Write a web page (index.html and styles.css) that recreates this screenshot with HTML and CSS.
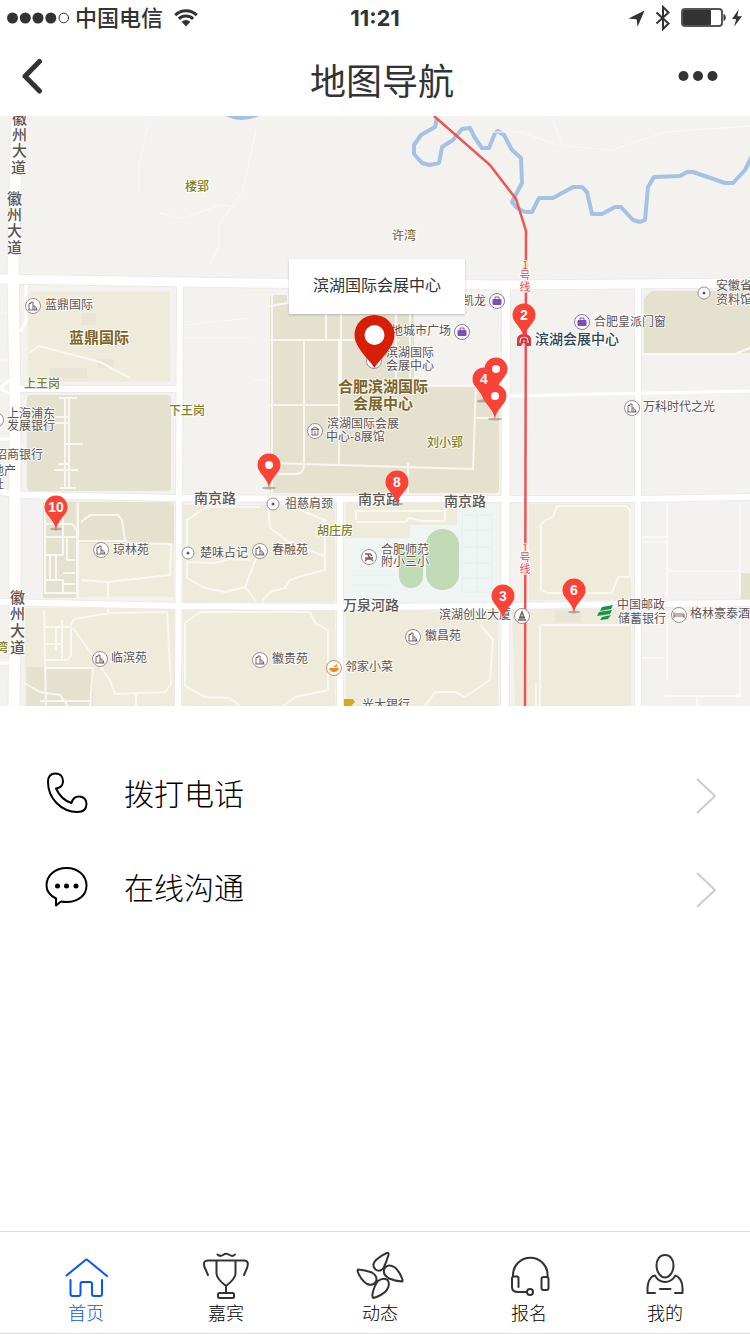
FILE: index.html
```html
<!DOCTYPE html>
<html lang="zh-CN">
<head>
    <meta charset="UTF-8">
    <meta name="viewport" content="width=device-width, initial-scale=1.0">
    <title>地图导航</title>
    <link rel="stylesheet" href="styles.css">
</head>
<body>
    <div class="page">
        <div class="status-bar">
            <div class="status-left">
                <svg class="signal" width="63" height="12" viewBox="0 0 63 12">
                    <circle cx="5.5" cy="6" r="5.5"/>
                    <circle cx="18.3" cy="6" r="5.5"/>
                    <circle cx="31" cy="6" r="5.5"/>
                    <circle cx="43.8" cy="6" r="5.5"/>
                    <circle class="empty" cx="56.8" cy="6" r="4.8"/>
                </svg>
                <span class="carrier">中国电信</span>
                <svg class="wifi" width="24" height="18" viewBox="0 0 24 18">
                    <path class="arc" d="M1.2 6.2a15.5 15.5 0 0 1 21.6 0M4.9 9.9a10.2 10.2 0 0 1 14.2 0"/>
                    <path d="M7.6 12.8a6.2 6.2 0 0 1 8.8 0L12 17.4z"/>
                </svg>
            </div>
            <div class="time">11:21</div>
            <div class="status-right">
                <svg width="17" height="17" viewBox="0 0 17 17"><path d="M.5 8.6 16.5.5 9.6 16.7 8.6 9.2z"/></svg>
                <svg class="bluetooth" width="16" height="26" viewBox="0 0 16 26"><path d="M1.5 7.5 13.5 18.5 8 24V2l5.5 5.5-12 11"/></svg>
                <svg class="battery" width="46" height="20" viewBox="0 0 46 20">
                    <rect class="case" x="1" y="1" width="40" height="17" rx="3"/>
                    <rect x="2" y="2" width="28" height="15" rx="1"/>
                    <path d="M42.5 6c3 .5 3 6.5 0 7z"/>
                </svg>
                <svg width="12" height="18" viewBox="0 0 12 18"><path d="M7.6.5 1 10h4.2L3.2 17.5 11 7.2H6.4z"/></svg>
            </div>
        </div>

        <header class="nav-bar">
            <button class="back" type="button" aria-label="返回">
                <svg width="24" height="36" viewBox="0 0 24 36"><path d="M19.5 3.5 5 18.3 19.5 33"/></svg>
            </button>
            <h1>地图导航</h1>
            <button class="more" type="button" aria-label="更多">
                <svg width="40" height="12" viewBox="0 0 40 12"><circle cx="5.5" cy="6" r="5"/><circle cx="20" cy="6" r="5"/><circle cx="34.5" cy="6" r="5"/></svg>
            </button>
        </header>

        <main>
            <svg class="map" viewBox="0 116 750 590">
                <defs>
                    <path id="pin" d="M0 23C-1 17-3.5 14-8.5 7.8A11.5 11.5 0 1 1 8.5 7.8C3.5 14 1 17 0 23z"/>
                    <g id="building">
                        <circle class="poi" r="7.5"/>
                        <path class="glyph" d="M-4 4V-2.5H-2V-4H0V4M0 0H2V4M3.5 4V1.5M-4.5 4H4.5"/>
                    </g>
                    <g id="bag">
                        <circle class="poi shop" r="7.5"/>
                        <rect class="shop-fill" x="-4.5" y="-2" width="9" height="6" rx="1"/>
                        <path class="shop-line" d="M-2-2V-4H2V-2"/>
                    </g>
                    <g id="spot">
                        <circle class="poi" r="6"/>
                        <circle class="dot" r="1.5"/>
                    </g>
                </defs>

                <rect class="land" x="0" y="116" width="750" height="590"/>

                <!-- blocks -->
                <g class="block">
                    <path d="M31 291H170V382H28V296z"/>
                    <path d="M44 502H174V597H44zM25 608H175V706H25z"/>
                    <path d="M183 505H335V602H183zM183 610H335V706H183z"/>
                    <path d="M346 610H498V706H346zM529 504H631V600H529zM512 608H631V706H515z"/>
                </g>
                <g class="block-dark">
                    <rect x="27" y="395" width="144" height="96" rx="4"/>
                    <path d="M270 295H414V386H499V490Q499 493 495 493H270z"/>
                    <path d="M78 502H170L174 506V543H78zM43 502H76V598H43zM27 667H93V706H27z"/>
                    <path d="M652 291H750V353H644V298zM741 573H750V600H741z"/>
                </g>
                <rect class="school" x="346" y="505" width="151" height="97"/>
                <path class="block" d="M346 503H457V525H410V538H346z"/>
                <path class="court" d="M462 515H492V592H462zM462 530H492M462 547H492M462 563H492M462 578H492M477 515V592M352 575H395M352 585H390"/>
                <rect class="field" x="426" y="529" width="33" height="61" rx="16"/>
                <rect class="field" x="399" y="543" width="24" height="45" rx="12"/>
                <g class="shade">
                    <rect x="82" y="313" width="14" height="12"/>
                    <rect x="50" y="368" width="37" height="10"/>
                    <rect x="97" y="359" width="17" height="9"/>
                    <rect x="555" y="611" width="26" height="11"/>
                </g>

                <!-- water -->
                <path class="water-fill" d="M226 116Q241 124 259 116z"/>
                <path class="water" d="M437 118 435 127 421 135 414 145V154L422 163 430 165 439 163 442 147 453 140 462 129 470 128 475 138 482 148H489L495 133 498 131 504 135 512 150 521 158 522 183 512 202 517 208 525 212H532L539 198H553L573 187H582L587 192 592 214H602L615 207H621L633 220 640 222 645 220 648 187 654 177 680 176 687 172H693L725 183H733L745 170 752 156"/>

                <!-- footpaths -->
                <path class="trail" d="M149 120 139 165V192M160 213 181 219 220 205 235 207M256 130 243 190 219 225V245L210 265M184 325 250 318M551 116 563 146 612 150 665 132 750 126M490 132 520 132 560 146M0 313H10M0 360H9M250 380H268M185 338H250"/>
                <path class="lane" d="M29 353 39 346 100 362 130 378M59 398H77M65 398V488M69 398V488M55 417H70M55 423H70M66 444H83M54 470H78M58 464H70M60 488H76"/>
                <path class="lane" d="M270 306 288 303V295M326 295V340M341 295V385M270 340H400M304 340V465Q304 474 295 474H270M339 340V464M270 405H338M270 463 473 469 476 385M408 463V493M396 295V386M410 295V386H498M476 418H498M272 295V493"/>
                <path class="lane" d="M44 524H72L77 530V595M44 537H76M44 555H63V500M50 555V580M56 555V580M44 580H63V594M63 573H75M63 584H75M67 537V560H75M44 593H76M45 500V593M78 503V597M81 522 90 515H118L122 520 125 540 129 543 171 544 170 575 108 582 81 580M78 541H125M108 582V612M44 610 46 706M44 627H71V655Q69 660 64 660H45M44 644H62M56 627V650M62 620V660M71 625 74 619 110 613 167 612 171 684 165 692 115 694 110 680 73 628M45 668H93L90 706M24 683 40 692 60 695 68 706M40 701H92M136 694V706"/>
                <path class="lane" d="M187 520 207 507H260M187 520V578L205 588 225 592 245 587 262 543M187 562 215 563 230 559 250 560M245 587 256 601M262 601 270 592 285 588 290 580 305 575 325 570V520L300 510M268 505 270 528 290 543 324 556M185 623 200 612 310 612 315 623 328 630V690L295 697 283 706M185 623V686L205 697 230 698 240 706M356 520V511H445V521H420L410 518 405 522H356M425 706 435 692H455L465 697 490 680 493 640 480 625M540 625V706M541 524 546 520 553 517 557 506H626L630 510V577M541 524V590L548 593H612L618 577H630M540 625H630M536 683V706"/>
                <path class="trail thick" d="M667 503V595M740 503V595M641 537H666M641 542H666M667 571H740M667 620V680M740 620V696H665M641 658H664M641 354H735L750 348M697 696V706"/>

                <!-- main roads -->
                <g class="road-edge">
                    <path class="w11" d="M17 116 13 270 15 400V600L14 706"/>
                    <path class="w9" d="M0 279 250 283 500 285 750 283"/>
                    <path class="w6" d="M20 389H180M180 283 178 706M0 492 25 495 180 498 340 499H640L750 497M0 602 180 606 340 607 500 606 640 604 750 603M340 499V706M638 285V706"/>
                    <path class="w8" d="M506 285 505 706"/>
                </g>
                <g class="road">
                    <path class="w11" d="M17 116 13 270 15 400V600L14 706"/>
                    <path class="w9" d="M0 279 250 283 500 285 750 283"/>
                    <path class="w6" d="M20 389H180M180 283 178 706M0 492 25 495 180 498 340 499H640L750 497M0 602 180 606 340 607 500 606 640 604 750 603M340 499V706M638 285V706"/>
                    <path class="w8" d="M506 285 505 706"/>
                    <path class="w3" d="M509 396 750 391M0 439H10M0 663H10M20 331Q26 325 26 318V285M0 388 10 380M0 388 10 394"/>
                </g>

                <!-- metro line 1 -->
                <path class="metro" d="M434 116 490 165 516 199 526 231 525 706"/>
                <g class="metro-label">
                    <text x="525" y="269">1</text><text x="525" y="280">号</text><text x="525" y="291">线</text>
                    <text x="525" y="552">1</text><text x="525" y="562">号</text><text x="525" y="573">线</text>
                </g>

                <!-- points of interest -->
                <use href="#building" x="33" y="306"/>
                <use href="#building" x="101" y="550"/>
                <use href="#building" x="100" y="659"/>
                <use href="#building" x="260" y="551"/>
                <use href="#building" x="260" y="660"/>
                <use href="#building" x="413" y="637"/>
                <use href="#building" x="632" y="408"/>
                <use href="#building" x="-4" y="420"/>
                <use href="#bag" x="497" y="301"/>
                <use href="#bag" x="462" y="332"/>
                <use href="#bag" x="582" y="322"/>
                <use href="#spot" x="273" y="504"/>
                <use href="#spot" x="188" y="553"/>
                <use href="#spot" x="704" y="293"/>
                <g transform="translate(315 431)">
                    <circle class="poi" r="7.5"/>
                    <path class="glyph" d="M-4-1.5 0-4 4-1.5zM-3-1V4H3V-1M0 0V4"/>
                </g>
                <g transform="translate(369 557)">
                    <circle class="poi" r="7.5"/>
                    <path class="glyph thick" d="M-4-3H1L3-1M-1-2 1 1M-4 1H4M-4 4-2 2H2L4 4"/>
                </g>
                <g transform="translate(522 616)">
                    <circle class="poi" r="7.5"/>
                    <path class="glyph thick" d="M-2 1 0-4 2 1zM-3 2H3M-4 4H4"/>
                </g>
                <g transform="translate(679 615)">
                    <circle class="poi" r="7.5"/>
                    <path class="glyph" d="M-5-3V3M-5 1H5V3M-4-1H5V1"/>
                </g>
                <g transform="translate(334 668)">
                    <circle class="poi food" r="7.5"/>
                    <path class="food-fill" d="M-5 0H5Q4 4 0 4T-5 0zM-1-1 3-4V-1z"/>
                </g>
                <path class="post" d="M602 607 613 605 611 609 600 611zM599 612 612 610 610 614 597 616zM602 617 611 615 608 619 600 620z"/>
                <g transform="translate(524 340)">
                    <path class="station" d="M-7 6V-1Q-6-6 0-6T7-1V6H3L1 3H-1L-3 6z"/>
                    <path class="station-line" d="M-4 3V1A4 4 0 0 1 4 1V3M-1 1H1"/>
                </g>
                <path class="bank" d="M344 699H353L355 702 351 706H344z"/>

                <g class="street">
                    <text x="12" y="124">徽</text><text x="12" y="140">州</text><text x="12" y="156">大</text><text x="11" y="173">道</text>
                    <text x="7" y="204">徽</text><text x="7" y="220">州</text><text x="7" y="236">大</text><text x="7" y="253">道</text>
                    <text x="10" y="603">徽</text><text x="10" y="619">州</text><text x="10" y="636">大</text><text x="10" y="653">道</text>
                </g>
                <g class="street small">
                    <text x="194" y="503">南京路</text>
                    <text x="358" y="504">南京路</text>
                    <text x="444" y="506">南京路</text>
                    <text x="343" y="610">万泉河路</text>
                </g>
                <g class="village">
                    <text x="185" y="191">楼郢</text>
                    <text x="24" y="388">上王岗</text>
                    <text x="169" y="415">下王岗</text>
                    <text x="427" y="447">刘小郢</text>
                    <text x="317" y="535">胡庄房</text>
                    <text x="-4" y="652">湾</text>
                    <text class="brown" x="392" y="240">许湾</text>
                </g>
                <g class="area">
                    <text x="69" y="343">蓝鼎国际</text>
                    <text x="338" y="392">合肥滨湖国际</text>
                    <text x="353" y="409">会展中心</text>
                </g>
                <g class="place">
                    <text x="45" y="309">蓝鼎国际</text>
                    <text x="7" y="418">上海浦东</text><text x="7" y="430">发展银行</text>
                    <text x="-5" y="459">招商银行</text><text x="-8" y="475">地产</text><text x="-8" y="489">社</text>
                    <text x="113" y="554">琼林苑</text><text x="111" y="662">临滨苑</text>
                    <text x="200" y="557">楚味占记</text><text x="272" y="554">春融苑</text>
                    <text x="272" y="663">徽贵苑</text><text x="345" y="671">邻家小菜</text>
                    <text x="285" y="508">祖慈肩颈</text>
                    <text x="327" y="428">滨湖国际会展</text><text x="326" y="441">中心-8展馆</text>
                    <text x="462" y="305">凯龙</text><text x="391" y="335">地城市广场</text>
                    <text x="386" y="357">滨湖国际</text><text x="386" y="370">会展中心</text>
                    <text x="381" y="554">合肥师范</text><text x="381" y="566">附小三小</text>
                    <text x="439" y="619">滨湖创业大厦</text><text x="425" y="640">徽昌苑</text>
                    <text x="362" y="709">光大银行</text>
                    <text x="594" y="326">合肥皇派门窗</text><text x="643" y="411">万科时代之光</text>
                    <text x="716" y="290">安徽省</text><text x="716" y="304">资料馆</text>
                    <text x="617" y="609">中国邮政</text><text x="618" y="623">储蓄银行</text>
                    <text x="690" y="618">格林豪泰酒</text>
                </g>
                <text class="metro-stop" x="535" y="344">滨湖会展中心</text>

                <!-- numbered pins -->
                <g class="pin-shadow">
                    <ellipse cx="56" cy="529" rx="6" ry="1.5"/>
                    <ellipse cx="269" cy="488" rx="7" ry="1.5"/>
                    <ellipse cx="397" cy="504" rx="6" ry="1.5"/>
                    <ellipse cx="495" cy="419" rx="7" ry="1.5"/>
                    <ellipse cx="482" cy="401" rx="5" ry="1.5"/>
                    <ellipse cx="574" cy="612" rx="6" ry="1.5"/>
                </g>
                <g class="pins">
                    <g transform="translate(524 315)"><use href="#pin"/><text y="5">2</text></g>
                    <g transform="translate(496 369)"><use href="#pin"/><circle r="4"/></g>
                    <g transform="translate(484 379)"><use href="#pin"/><text y="5">4</text></g>
                    <g transform="translate(495 396)"><use href="#pin"/><circle r="4"/></g>
                    <g transform="translate(269 465)"><use href="#pin"/><circle r="4"/></g>
                    <g transform="translate(56 507)"><use href="#pin"/><text y="5">10</text></g>
                    <g transform="translate(397 482)"><use href="#pin"/><text y="5">8</text></g>
                    <g transform="translate(503 596)"><use href="#pin"/><text y="5">3</text></g>
                    <g transform="translate(574 590)"><use href="#pin"/><text y="5">6</text></g>
                </g>

                <!-- current place -->
                <circle class="poi" cx="374" cy="361" r="7.5"/>
                <path class="marker" d="M374.5 368C370 360 354.5 348 354.5 335A20 20 0 1 1 394.5 335C394.5 348 379 360 374.5 368z"/>
                <circle class="marker-hole" cx="374.5" cy="335" r="10"/>
                <rect class="callout" x="289" y="259" width="176" height="55"/>
                <text class="callout-text" x="377" y="291">滨湖国际会展中心</text>
            </svg>

            <div class="contact">
                <a class="contact-row" href="#call">
                    <svg class="contact-icon" width="44" height="44" viewBox="0 0 44 44">
                        <path d="M4 11C4 5.5 7 2.5 11.5 2.5C16 2.5 19 5.5 19 10C19 14.5 16 17 12 17.5C15 24 21 30 27.5 32C28.5 28 31 25.5 35 25.5C39.500 25.5 42.5 28.5 42.5 32.5C42.5 38 39.5 41 33.5 41C17 41 4 27 4 11z"/>
                    </svg>
                    <span>拨打电话</span>
                    <svg class="arrow" width="22" height="38" viewBox="0 0 22 38"><path d="M2 2 20 19 2 36"/></svg>
                </a>
                <a class="contact-row" href="#chat">
                    <svg class="contact-icon" width="44" height="44" viewBox="0 0 44 44">
                        <path d="M12 33.5C5 30 2.5 26 2.5 20.500C2.5 10.5 11 3 22.5 3S42.5 10.5 42.5 20.5S34 37 22.5 37C20 37 18 36.7 17 36.5L12 40.5z"/>
                        <circle cx="13.500" cy="21" r="2.5"/><circle cx="22.5" cy="21" r="2.5"/><circle cx="32" cy="21" r="2.5"/>
                    </svg>
                    <span>在线沟通</span>
                    <svg class="arrow" width="22" height="38" viewBox="0 0 22 38"><path d="M2 2 20 19 2 36"/></svg>
                </a>
            </div>
        </main>

        <nav class="tab-bar">
            <a class="tab active" href="#home">
                <svg width="48" height="48" viewBox="0 0 48 48"><path d="M4.5 23.5 23.5 8Q24.5 7.2 25.5 8L45 24M8.5 28V42Q8.5 44 10.5 44H16.5Q18.5 44 18.5 42V32Q18.5 30 20.5 30H28Q30 30 30 32V42Q30 44 32 44H38Q40 44 40 42V28"/></svg>
                <span>首页</span>
            </a>
            <a class="tab" href="#guests">
                <svg width="48" height="48" viewBox="0 0 48 48"><path d="M15.5 2.5Q18 5 21 3Q24.5.5 27.5 3Q31 5 33 2.5M6 23 2.5 15Q.5 8.5 6 8.5H42.5Q47.5 9 45 16L42 23M14.5 9V22Q15 27 24 34Q33 27 33.5 22V9M24 34V41M17.5 41H30.5Q32 41 32 42.5V44.5Q32 46 30.5 46H17.5Q16 46 16 44.5V42.5Q16 41 17.5 41z"/></svg>
                <span>嘉宾</span>
            </a>
            <a class="tab" href="#news">
                <svg width="48" height="48" viewBox="0 0 48 48"><path d="M31 .8Q33 .8 32.5 3Q30 11 27.5 16Q24 20.5 19.500 17.5Q15 13 20 8Q24 4 31 .8zM2 17.5Q9 18 16 20.5Q22 24.5 20 29.5Q17 34.5 11 32Q4 27 1.5 19Q1.5 17.5 2 17.5zM46.5 29.500Q39 29 33 26.5Q26 22 28.5 16.5Q32 11 39 15.5Q44 20 46.5 27.5zM17.5 46Q16 45 16.5 42Q18 34 22 29Q27 25 31.5 28Q35 33 30 39Q25 44 17.5 46z"/></svg>
                <span>动态</span>
            </a>
            <a class="tab" href="#signup">
                <svg width="48" height="48" viewBox="0 0 48 48"><path d="M8 25V23A17.3 17.3 0 0 1 42.6 23V25M13.5 35V26Q13.5 24.5 12 24.5H9Q7 24.5 7 26.5V35Q7 40 13 40H22M38.5 25H41.5Q43.5 25 43.5 27V36Q43.5 38 41.5 38H38.5Q36.5 38 36.5 36V27Q36.5 25 38.5 25z"/><circle cx="25" cy="40" r="3"/></svg>
                <span>报名</span>
            </a>
            <a class="tab" href="#me">
                <svg width="48" height="48" viewBox="0 0 48 48"><path d="M24 3C29 3 32.5 7 32.5 13.5S28.5 25.5 24 25.5S15.5 20 15.5 13.5S19 3 24 3zM14 41H6.500V36Q7 27 12 24L14 23.5Q17.500 30 24 30T34.5 23.5L37 25Q41.5 29 41.5 36V41H34M19 37H29.5"/></svg>
                <span>我的</span>
            </a>
        </nav>
    </div>
</body>
</html>
```
FILE: styles.css
```css
* {
    margin: 0;
    padding: 0;
    box-sizing: border-box;
}

body {
    font-family: "Noto Sans CJK SC", "Noto Sans", sans-serif;
    background: #fff;
    color: #000;
}

a {
    color: inherit;
    text-decoration: none;
}

button {
    border: 0;
    background: none;
    cursor: pointer;
}

svg {
    display: block;
}

.page {
    display: flex;
    flex-direction: column;
    min-height: 100vh;
}

/* status bar */
.status-bar {
    display: grid;
    grid-template-columns: 1fr auto 1fr;
    align-items: center;
    height: 36px;
    padding: 0 7px;
    color: #333;
    fill: #333;
}

.status-left,
.status-right {
    display: flex;
    align-items: center;
}

.status-left {
    gap: 5px;
}

.status-right {
    justify-content: flex-end;
    gap: 10px;
}

.carrier {
    padding-bottom: 3px;
    font-size: 22px;
    line-height: 33px;
    font-weight: 500;
}

.wifi {
    margin-left: 6px;
}

.signal .empty {
    fill: none;
    stroke: #333;
}

.wifi .arc {
    fill: none;
    stroke: #333;
    stroke-width: 3;
}

.time {
    font-family: Inter, sans-serif;
    font-size: 22px;
    font-weight: 700;
}

.bluetooth path {
    fill: none;
    stroke: #333;
    stroke-width: 2;
}

.battery {
    margin-right: -6px;
}

.battery .case {
    fill: none;
    stroke: #555;
    stroke-width: 2;
}

/* nav bar */
.nav-bar {
    display: flex;
    align-items: center;
    height: 80px;
    padding: 0 32px 0 20px;
}

.back {
    width: 66px;
}

.back path {
    fill: none;
    stroke: #333;
    stroke-width: 5;
    stroke-linecap: round;
    stroke-linejoin: round;
}

.nav-bar h1 {
    flex: 1;
    padding-top: 6px;
    font-size: 36px;
    font-weight: 400;
    line-height: 52px;
    text-align: center;
    color: #333;
}

.more {
    fill: #333;
}

/* map */
.map {
    width: 100%;
    height: auto;
}

.land {
    fill: #f4f2ef;
}

.block {
    fill: #eeebdb;
}

.block-dark {
    fill: #e4e1cf;
}

.school {
    fill: #eff5f2;
}

.court {
    fill: none;
    stroke: #e6efec;
}

.field {
    fill: #c0dab6;
}

.shade {
    fill: #e8e5d8;
}

.water {
    fill: none;
    stroke: #a5c1e4;
    stroke-width: 4;
    stroke-linejoin: round;
}

.water-fill {
    fill: #a5c1e4;
}

.trail {
    fill: none;
    stroke: #faf9f7;
}

.trail.thick {
    stroke-width: 2;
}

.lane {
    fill: none;
    stroke: #f8f7f2;
    stroke-width: 2;
    stroke-linejoin: round;
}

.road,
.road-edge {
    fill: none;
    stroke: #fff;
}

.road-edge {
    stroke: #eceae6;
}

.w3 { stroke-width: 3; }
.w6 { stroke-width: 6; }
.w8 { stroke-width: 8; }
.w9 { stroke-width: 9; }
.w11 { stroke-width: 11; }
.road-edge .w6 { stroke-width: 8; }
.road-edge .w8 { stroke-width: 10; }
.road-edge .w9 { stroke-width: 11; }
.road-edge .w11 { stroke-width: 13; }

.metro {
    fill: none;
    stroke: #ee5357;
    stroke-width: 2.5;
}

.map text {
    paint-order: stroke;
    stroke: #fff;
    stroke-opacity: 0.8;
    stroke-width: 2;
    stroke-linejoin: round;
}

.metro-label {
    font-size: 11px;
    fill: #e5484d;
    text-anchor: middle;
}

.map .metro-label text {
    stroke-opacity: 1;
}

.street {
    font-size: 15px;
    font-weight: 500;
    fill: #5c5653;
}

.street.small {
    font-size: 14px;
}

.village {
    font-size: 12px;
    font-weight: 500;
    fill: #7c8029;
}

.village .brown {
    fill: #85733f;
}

.area {
    font-size: 15px;
    font-weight: 700;
    fill: #7c6529;
}

.place {
    font-size: 12px;
    fill: #5c5353;
}

.metro-stop {
    font-size: 14px;
    font-weight: 500;
    fill: #2b465b;
}

.poi {
    fill: #fff;
    stroke: #9b9091;
}

.glyph {
    fill: none;
    stroke: #76605f;
}

.glyph.thick {
    stroke-width: 1.5;
}

.dot {
    fill: #665c5c;
}

.shop {
    stroke: #8a75b5;
}

.shop-fill {
    fill: #7d4fb5;
}

.shop-line {
    fill: none;
    stroke: #7d4fb5;
}

.food {
    stroke: #c88a5e;
}

.food-fill {
    fill: #ef8a22;
}

.post {
    fill: #15934b;
}

.bank {
    fill: #d3a91e;
}

.station {
    fill: #d9363f;
}

.station-line {
    fill: none;
    stroke: #fff;
}

.pin-shadow {
    fill: #8a8580;
    fill-opacity: 0.6;
}

.pins {
    fill: #fb4236;
}

.pins circle {
    fill: #fff;
}

.pins text {
    font-family: "Liberation Sans", sans-serif;
    font-size: 14px;
    font-weight: 700;
    fill: #fff;
    stroke: none;
    text-anchor: middle;
}

.marker {
    fill: #d81e06;
}

.marker-hole {
    fill: #fff;
}

.callout {
    fill: #fff;
    filter: drop-shadow(0 1px 1px rgba(0, 0, 0, 0.2));
}

.callout-text {
    font-size: 16px;
    fill: #333;
    text-anchor: middle;
}

/* contact */
.contact {
    padding: 43px 33px 0 44px;
}

.contact-row {
    display: flex;
    align-items: center;
    gap: 36px;
    height: 94px;
    font-size: 30px;
    font-weight: 300;
    line-height: 44px;
}

.contact-row span {
    flex: 1;
    padding-bottom: 8px;
}

.contact-icon {
    margin-bottom: 6px;
}

.contact-icon path {
    fill: none;
    stroke: #000;
    stroke-width: 2;
    stroke-linejoin: round;
}

.arrow path {
    fill: none;
    stroke: #ccc;
    stroke-width: 2;
}

/* tab bar */
.tab-bar {
    display: grid;
    grid-template-columns: 140fr 140fr 168fr 130fr 142fr;
    height: 103px;
    margin-top: auto;
    padding: 20px 14px 0 16px;
    border-top: 1px solid #ddd;
    border-bottom: 1px solid #ddd;
}

.tab {
    display: flex;
    flex-direction: column;
    align-items: center;
    font-size: 18px;
    font-weight: 300;
    line-height: 24px;
}

.tab svg {
    fill: none;
    stroke: #333;
    stroke-width: 2;
    stroke-linecap: round;
    stroke-linejoin: round;
}

.tab.active {
    color: #0b54f4;
}

.tab.active svg {
    stroke: #0b54f4;
}
```
